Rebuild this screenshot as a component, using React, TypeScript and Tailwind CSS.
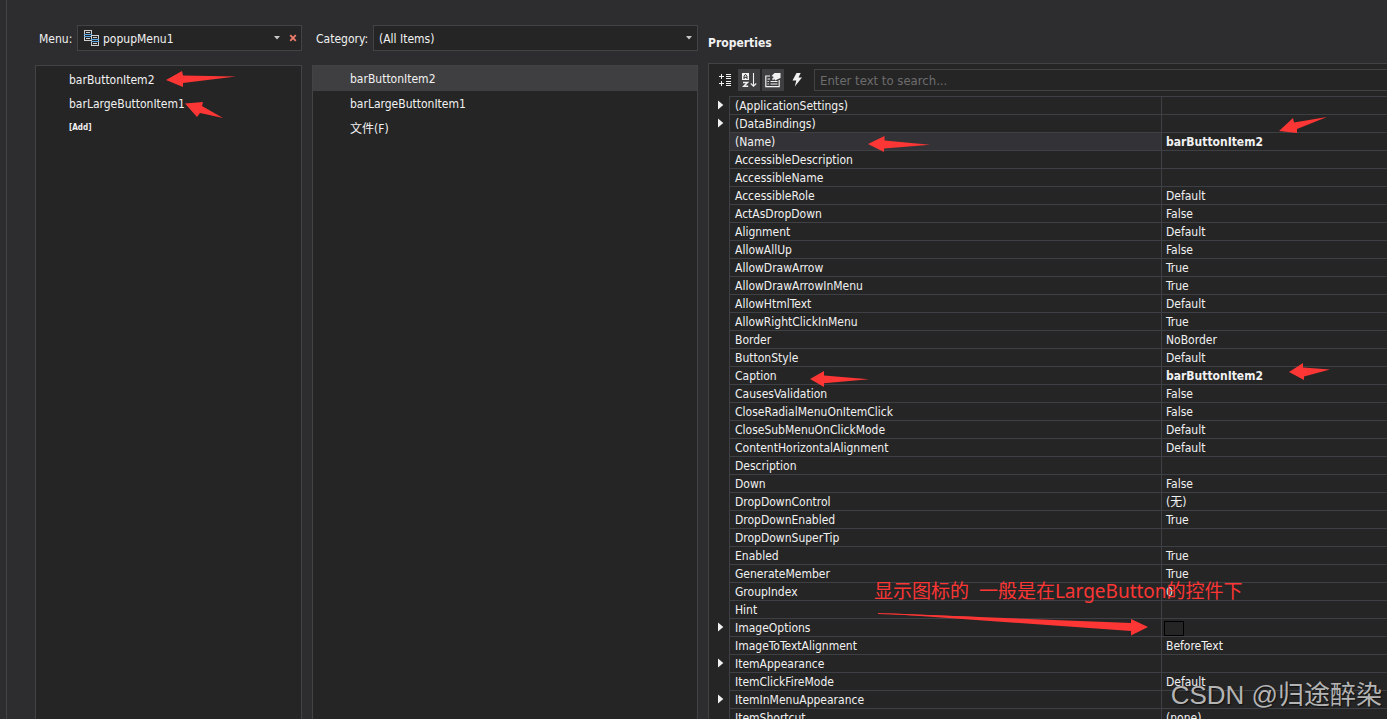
import type { ReactNode } from "react";

type Row = { name: string; value?: string; group?: boolean; bold?: boolean; selected?: boolean; swatch?: boolean };

const rows: Row[] = [
  { name: "(ApplicationSettings)", group: true },
  { name: "(DataBindings)", group: true },
  { name: "(Name)", value: "barButtonItem2", bold: true, selected: true },
  { name: "AccessibleDescription" },
  { name: "AccessibleName" },
  { name: "AccessibleRole", value: "Default" },
  { name: "ActAsDropDown", value: "False" },
  { name: "Alignment", value: "Default" },
  { name: "AllowAllUp", value: "False" },
  { name: "AllowDrawArrow", value: "True" },
  { name: "AllowDrawArrowInMenu", value: "True" },
  { name: "AllowHtmlText", value: "Default" },
  { name: "AllowRightClickInMenu", value: "True" },
  { name: "Border", value: "NoBorder" },
  { name: "ButtonStyle", value: "Default" },
  { name: "Caption", value: "barButtonItem2", bold: true },
  { name: "CausesValidation", value: "False" },
  { name: "CloseRadialMenuOnItemClick", value: "False" },
  { name: "CloseSubMenuOnClickMode", value: "Default" },
  { name: "ContentHorizontalAlignment", value: "Default" },
  { name: "Description" },
  { name: "Down", value: "False" },
  { name: "DropDownControl", value: "(无)" },
  { name: "DropDownEnabled", value: "True" },
  { name: "DropDownSuperTip" },
  { name: "Enabled", value: "True" },
  { name: "GenerateMember", value: "True" },
  { name: "GroupIndex", value: "0" },
  { name: "Hint" },
  { name: "ImageOptions", group: true, swatch: true },
  { name: "ImageToTextAlignment", value: "BeforeText" },
  { name: "ItemAppearance", group: true },
  { name: "ItemClickFireMode", value: "Default" },
  { name: "ItemInMenuAppearance", group: true },
  { name: "ItemShortcut", value: "(none)" },
];

function Caret() {
  return (
    <svg width="6" height="4" viewBox="0 0 6 4" className="pointer-events-none">
      <path d="M0 0h6L3 3.5z" fill="#c8c8c8" />
    </svg>
  );
}

function MenuIcon() {
  return (
    <svg width="16" height="17" viewBox="0 0 16 17" fill="none" shapeRendering="crispEdges">
      <rect x=".5" y=".5" width="7" height="10" stroke="#d0d0d0" />
      <path d="M2 2.500h4M2 8.500h4" stroke="#d0d0d0" />
      <path d="M0 4.500h8M0 6.500h8" stroke="#5aa9e6" />
      <rect x="7.500" y="5.500" width="7" height="10" fill="#252526" stroke="#d0d0d0" />
      <path d="M9 7.500h4M9 13.500h4" stroke="#d0d0d0" />
      <path d="M7 9.500h8M7 11.500h8" stroke="#5aa9e6" />
    </svg>
  );
}

function ToolButton({ label, active, children }: { label: string; active?: boolean; children: ReactNode }) {
  return (
    <button
      type="button"
      aria-label={label}
      className={`flex size-[22px] items-center justify-center ${active ? "bg-[#3f3f41]" : ""}`}
    >
      {children}
    </button>
  );
}

export default function App() {
  return (
    <main className="relative flex h-screen overflow-hidden bg-[#2d2d30] pl-1.5 font-['DejaVu_Sans_Condensed','Noto_Sans_CJK_SC',sans-serif] text-[12px] leading-4 text-[#f1f1f1]">
      <div className="flex min-w-0 flex-1 gap-2.5 border-l border-[#434346] pl-7">
        <section className="flex w-[267px] shrink-0 flex-col pt-[25px]">
          <div className="flex items-center pl-1">
            <label htmlFor="menu" className="w-[38px] pt-0.5">Menu:</label>
            <div className="relative flex h-[26px] flex-1 items-center border border-[#434346] bg-[#252526]">
              <span className="pointer-events-none absolute left-1.5">
                <MenuIcon />
              </span>
              <select id="menu" className="h-full w-full appearance-none bg-transparent pt-0.5 pl-[25px] outline-none">
                <option>popupMenu1</option>
              </select>
              <div className="pointer-events-none absolute right-[21px]">
                <Caret />
              </div>
              <button type="button" aria-label="Delete menu" className="absolute right-1 flex size-2 items-center justify-center">
                <svg width="8" height="8" viewBox="0 0 8 8">
                  <path d="M1.2 1.2l5.6 5.6M6.8 1.2L1.2 6.8" stroke="#ee7d6c" strokeWidth="1.8" />
                </svg>
              </button>
            </div>
          </div>
          <ul className="mt-3.5 flex-1 border border-b-0 border-[#434346] bg-[#252526] pt-0.5 pl-[33px]">
            <li className="flex h-6 items-center">barButtonItem2</li>
            <li className="flex h-6 items-center">barLargeButtonItem1</li>
            <li className="flex h-6 items-center">
              <button type="button" className="text-[8px] font-bold">[Add]</button>
            </li>
          </ul>
        </section>

        <section className="flex w-[386px] shrink-0 flex-col pt-[25px]">
          <div className="flex items-center pl-1">
            <label htmlFor="category" className="w-[57px] pt-0.5">Category:</label>
            <div className="relative flex h-[26px] flex-1 items-center border border-[#434346] bg-[#252526]">
              <select id="category" className="h-full w-full appearance-none bg-transparent pt-0.5 pl-[5px] outline-none">
                <option>(All Items)</option>
              </select>
              <div className="pointer-events-none absolute right-[5px]">
                <Caret />
              </div>
            </div>
          </div>
          <ul className="mt-3.5 flex-1 border border-b-0 border-[#434346] bg-[#252526]">
            <li className="flex h-[25px] items-center bg-[#3f3f41] pl-[37px]">barButtonItem2</li>
            <li className="flex h-[25px] items-center pl-[37px]">barLargeButtonItem1</li>
            <li className="flex h-[25px] items-center pl-[37px]">文件(F)</li>
          </ul>
        </section>

        <section className="flex min-w-0 flex-1 flex-col pt-[35px]">
          <h2 className="font-bold">Properties</h2>
          <div className="mt-3 min-h-0 flex-1 overflow-hidden border-t border-l border-[#434346] bg-[#252526]">
            <div className="flex gap-0.5 pt-[5px] pb-[5px] pl-[5px]">
              <ToolButton label="Categorized">
                <svg width="12" height="12" viewBox="0 0 12 12" shapeRendering="crispEdges">
                  <path
                    d="M0 2.500h5M2.500 0v5M0 9.500h5M2.500 7v5M7 .5h5M7 2.500h5M7 4.500h5M7 7.500h5M7 9.500h5M7 11.500h5"
                    stroke="#f1f1f1"
                  />
                </svg>
              </ToolButton>
              <ToolButton label="Alphabetical" active>
                <svg width="15" height="16" viewBox="0 0 15 16" fill="none">
                  <rect x="0" y="1" width="7" height="7" fill="#f1f1f1" />
                  <path d="M2 7V4.300L3.500 2.300 5 4.300V7M2 5.300h3" stroke="#303030" />
                  <path d="M1 10.500h4.500L1.800 14.300h4.400" stroke="#f1f1f1" strokeWidth="1.500" />
                  <path d="M11.500 1v13M8.800 11.500l2.700 2.700 2.700-2.700" stroke="#f1f1f1" strokeWidth="1.100" />
                </svg>
              </ToolButton>
              <ToolButton label="Properties" active>
                <svg width="16" height="16" viewBox="0 0 16 16" fill="none">
                  <path d="M5 4H.8v10.700h13.400V8" stroke="#f1f1f1" strokeWidth="1.200" />
                  <path d="M2.500 7h2.500M2.500 9.500h1.300M5.500 9.500h7M2.500 12h1.300M5.500 12h7" stroke="#f1f1f1" strokeWidth="1.100" />
                  <path d="M6.500 4l3-3h6v5L12 7.500l-1.500 1-1-1.200-1.700.7L7 7l1.800-2z" fill="#f1f1f1" />
                </svg>
              </ToolButton>
              <ToolButton label="Events">
                <svg width="11" height="14" viewBox="0 0 11 14">
                  <path d="M4.500 0h4.200L6.500 4.500H10L2.800 13.500l1.500-6H.5z" fill="#f1f1f1" />
                </svg>
              </ToolButton>
              <input
                type="search"
                aria-label="Search properties"
                placeholder="Enter text to search..."
                className="ml-1 h-[22px] min-w-0 flex-1 border border-r-0 border-[#434346] bg-[#252526] px-[5px] text-[13px] outline-none placeholder:text-[#6d6d6d]"
              />
            </div>
            <table className="w-full table-fixed border-separate border-spacing-0">
              <colgroup>
                <col className="w-5" />
                <col className="w-[432px]" />
                <col />
              </colgroup>
              <tbody>
                {rows.map((row) => (
                  <tr key={row.name} className="h-[18px]">
                    <td className="p-0">
                      {row.group && (
                        <button type="button" aria-label={`Expand ${row.name}`} className="ml-[9px] block">
                          <svg width="6" height="10" viewBox="0 0 6 10">
                            <path d="M0 .5v9L5.300 5z" fill="#f1f1f1" />
                          </svg>
                        </button>
                      )}
                    </td>
                    <th
                      scope="row"
                      className={`h-[18px] border-t border-l border-[#3f3f46] p-0 pt-px pl-[5px] text-left leading-4 font-normal ${row.selected ? "bg-[#333337]" : ""}`}
                    >
                      {row.name}
                    </th>
                    <td
                      className={`h-[18px] border-t border-l border-[#3f3f46] p-0 pt-px leading-4 ${row.swatch ? "pl-0.5" : "pl-1"} ${row.bold ? "font-bold" : ""}`}
                    >
                      {row.swatch ? <span className="block h-[15px] w-5 border border-black" /> : row.value}
                    </td>
                  </tr>
                ))}
              </tbody>
            </table>
          </div>
        </section>
      </div>

      <svg width="1387" height="719" viewBox="0 0 1387 719" fill="#fb3634" className="pointer-events-none absolute top-0 left-0">
        <path d="M166 80l16-9 1 4.500 53 1-53 6.500v4z" />
        <path d="M185 103.500l18-1.500-1 4 21 12-23-5-3 4z" />
        <path d="M868 144l16.500-8v4.500l45.500 4.200-46 3.800v3.500z" />
        <path d="M1279 131l14-13 1 4.500 33-5.500-30 12v4z" />
        <path d="M810 379l14-8v4.500l45 3.800-45 4v3.700z" />
        <path d="M1289 372l14-9v4.500l27 2-26 7v3.500z" />
        <path d="M878 613l253 10v-4l17 8-17 8.500V631z" />
        <path d="M878 613.500l100 4" stroke="#fb3634" strokeWidth="1" />
      </svg>
      <p className="pointer-events-none absolute top-[579px] left-[874px] font-['Noto_Sans','Noto_Sans_CJK_SC',sans-serif] text-[19px] leading-6 whitespace-pre text-[#fb3634]">
        {"显示图标的  一般是在LargeButton的控件下"}
      </p>
      <p className="pointer-events-none absolute right-[5px] bottom-2 font-['Liberation_Sans','Noto_Sans_CJK_SC',sans-serif] text-[26px] leading-8 whitespace-nowrap text-[#b4b4b4] [text-shadow:1px_1px_1px_#111111]">
        CSDN @归途醉染
      </p>
    </main>
  );
}
